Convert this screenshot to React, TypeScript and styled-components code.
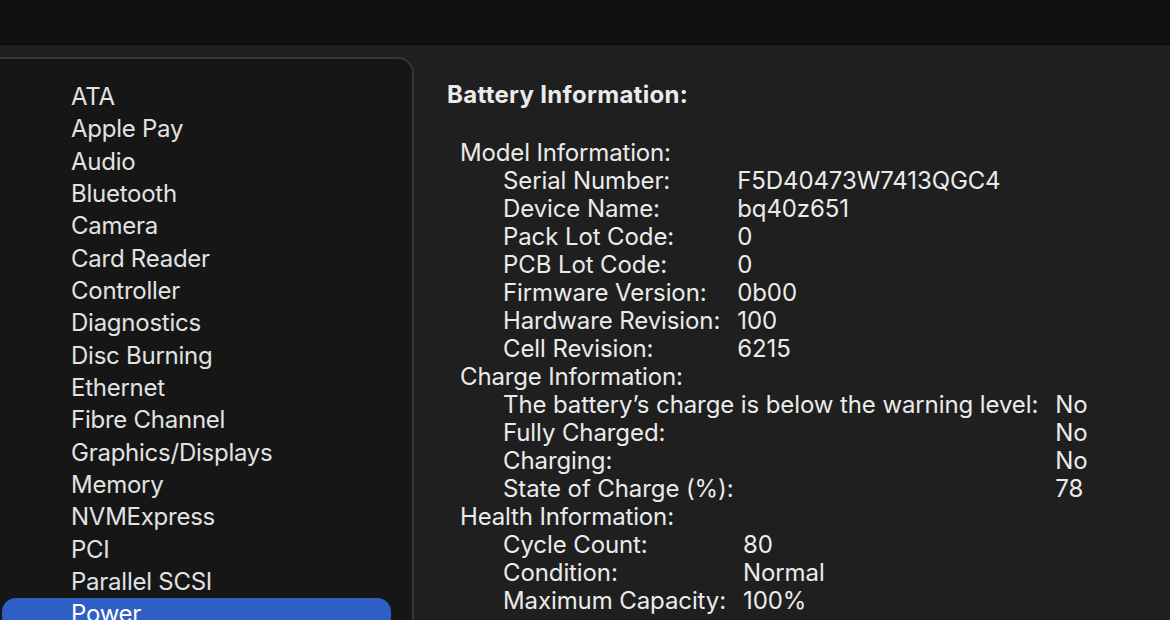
import React from "react";
import styled, { createGlobalStyle } from "styled-components";

const Global = createGlobalStyle`
  html, body { margin: 0; padding: 0; background: #1f1f1f; }
  body { font-family: Inter, "Noto Sans", "Liberation Sans", sans-serif; -webkit-font-smoothing: antialiased; }
  #root { width: 1170px; height: 620px; overflow: hidden; }
`;

const Window = styled.div`
  width: 1170px;
  height: 620px;
  display: flex;
  flex-direction: column;
  background: #1f1f1f;
  overflow: hidden;
`;

const TitleBar = styled.div`
  height: 43px;
  flex: none;
  background: #111111;
  border-bottom: 2px solid #0b0b0b;
`;

const Main = styled.div`
  flex: 1;
  display: flex;
  align-items: flex-start;
  padding-top: 12px;
  min-height: 0;
`;

const Sidebar = styled.nav`
  width: 414px;
  height: 600px;
  flex: none;
  box-sizing: border-box;
  background: #161616;
  border: 2px solid #363636;
  border-left: none;
  border-top-right-radius: 16px;
  padding: 22px 21px 0 2px;
`;

const NavItem = styled.div<{ $active?: boolean }>`
  height: 32.33px;
  line-height: 32.33px;
  padding-left: 69px;
  font-size: 24px;
  letter-spacing: -0.25px;
  color: ${(p) => (p.$active ? "#ffffff" : "#e2e2e2")};
  background: ${(p) => (p.$active ? "#2f5ec4" : "transparent")};
  border-radius: 14px;
  white-space: nowrap;
`;

const Content = styled.section`
  flex: 1;
  padding: 24px 0 0 33px;
  color: #ebebeb;
`;

const Heading = styled.div`
  font-size: 24px;
  font-weight: 700;
  line-height: 28px;
  letter-spacing: 0.3px;
  margin-bottom: 30px;
`;

const Group = styled.div`
  padding-left: 13px;
`;

const GroupTitle = styled.div`
  font-size: 24px;
  line-height: 28px;
  letter-spacing: -0.15px;
`;

const Pairs = styled.div`
  display: grid;
  grid-template-columns: max-content max-content;
  column-gap: 17px;
  padding-left: 43px;
  font-size: 24px;
  line-height: 28px;
  letter-spacing: -0.1px;
  white-space: nowrap;
`;

const navItems = [
  "ATA",
  "Apple Pay",
  "Audio",
  "Bluetooth",
  "Camera",
  "Card Reader",
  "Controller",
  "Diagnostics",
  "Disc Burning",
  "Ethernet",
  "Fibre Channel",
  "Graphics/Displays",
  "Memory",
  "NVMExpress",
  "PCI",
  "Parallel SCSI",
  "Power",
];

const groups: { title: string; rows: [string, string][] }[] = [
  {
    title: "Model Information:",
    rows: [
      ["Serial Number:", "F5D40473W7413QGC4"],
      ["Device Name:", "bq40z651"],
      ["Pack Lot Code:", "0"],
      ["PCB Lot Code:", "0"],
      ["Firmware Version:", "0b00"],
      ["Hardware Revision:", "100"],
      ["Cell Revision:", "6215"],
    ],
  },
  {
    title: "Charge Information:",
    rows: [
      ["The battery\u2019s charge is below the warning level:", "No"],
      ["Fully Charged:", "No"],
      ["Charging:", "No"],
      ["State of Charge (%):", "78"],
    ],
  },
  {
    title: "Health Information:",
    rows: [
      ["Cycle Count:", "80"],
      ["Condition:", "Normal"],
      ["Maximum Capacity:", "100%"],
    ],
  },
];

export default function App() {
  return (
    <Window>
      <Global />
      <TitleBar />
      <Main>
        <Sidebar>
          {navItems.map((n) => (
            <NavItem key={n} $active={n === "Power"}>
              {n}
            </NavItem>
          ))}
        </Sidebar>
        <Content>
          <Heading>Battery Information:</Heading>
          {groups.map((g) => (
            <Group key={g.title}>
              <GroupTitle>{g.title}</GroupTitle>
              <Pairs>
                {g.rows.map(([k, v]) => (
                  <React.Fragment key={k}>
                    <span>{k}</span>
                    <span>{v}</span>
                  </React.Fragment>
                ))}
              </Pairs>
            </Group>
          ))}
        </Content>
      </Main>
    </Window>
  );
}
